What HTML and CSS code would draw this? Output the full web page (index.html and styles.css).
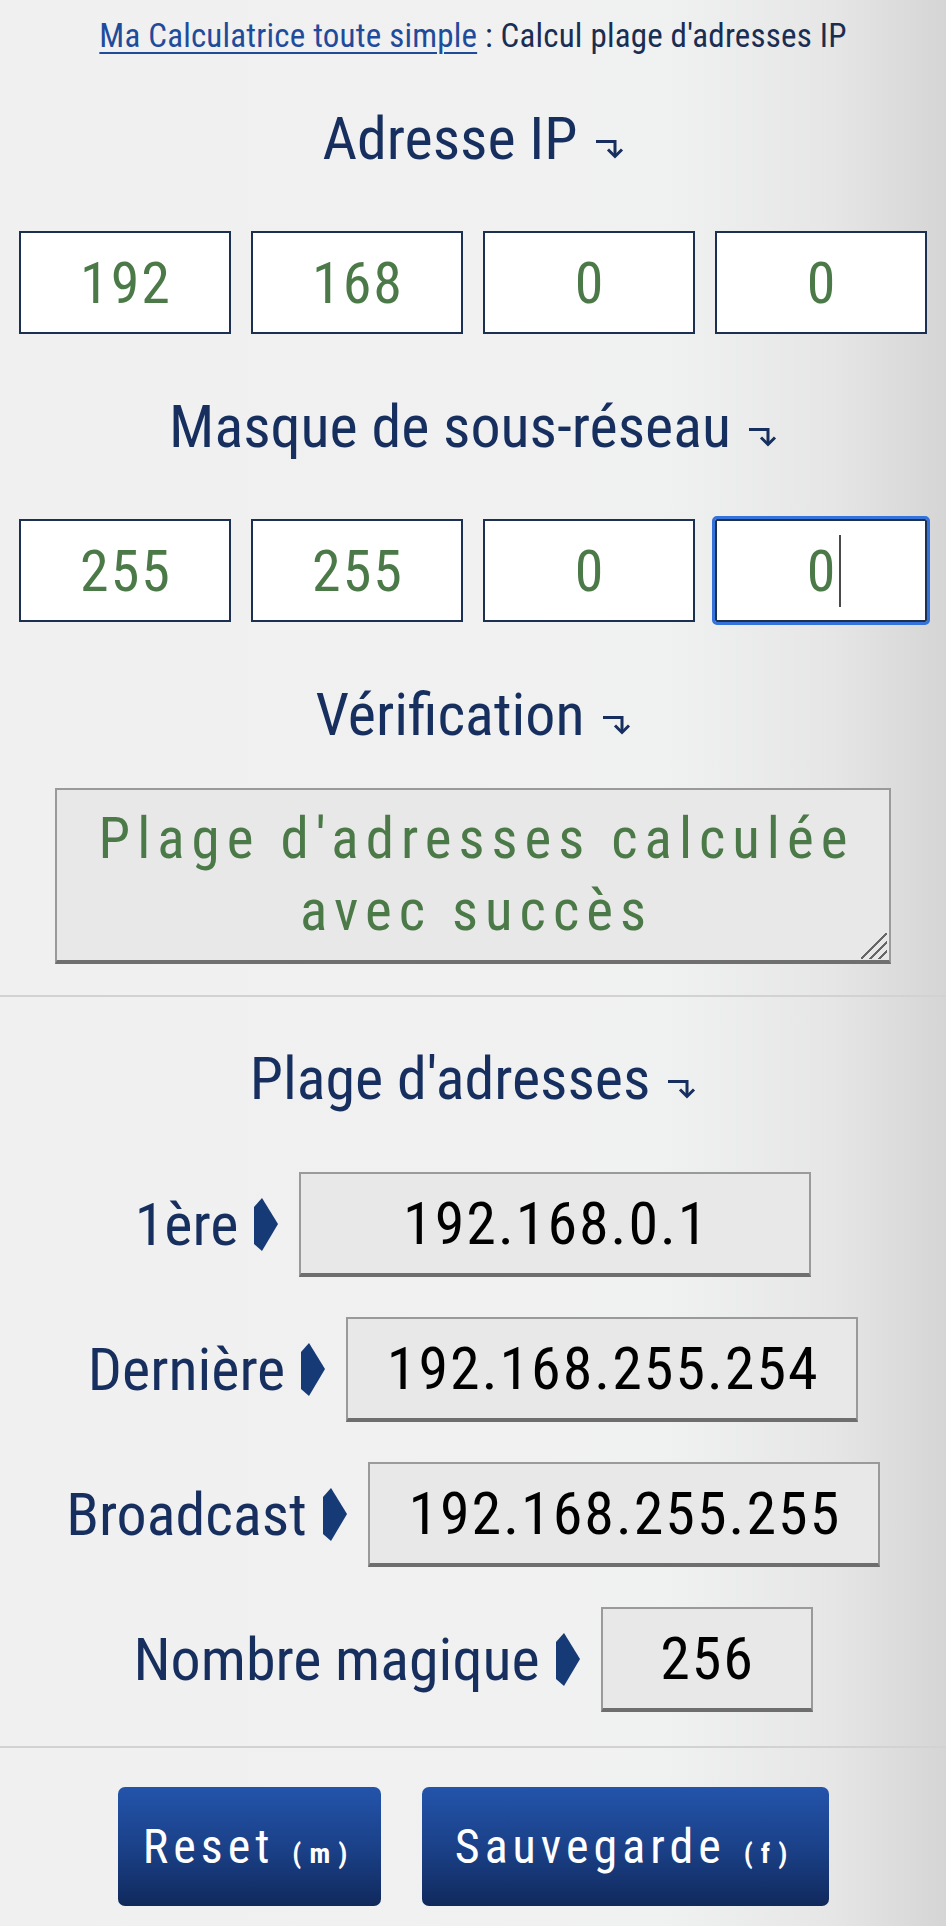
FILE: index.html
```html
<!DOCTYPE html>
<html lang="fr">
<head>
<meta charset="utf-8">
<title>Calcul plage d'adresses IP</title>
<link rel="stylesheet" href="styles.css">
</head>
<body>
<header class="crumb"><a class="crumb-link" href="#">Ma Calculatrice toute simple</a> : Calcul plage d'adresses IP</header>
<main class="page">
  <section class="block">
    <h2 class="title">Adresse IP<svg class="drop" viewBox="0 0 28 20" width="28" height="20"><path d="M0 2.5H19V17" fill="none" stroke="currentColor" stroke-width="3"/><path d="M12 10.5L19 17.5L26 10.5" fill="none" stroke="currentColor" stroke-width="3"/></svg></h2>
    <div class="octets">
      <input class="octet" type="text" value="192">
      <input class="octet" type="text" value="168">
      <input class="octet" type="text" value="0">
      <input class="octet" type="text" value="0">
    </div>
  </section>
  <section class="block">
    <h2 class="title">Masque de sous-réseau<svg class="drop" viewBox="0 0 28 20" width="28" height="20"><path d="M0 2.5H19V17" fill="none" stroke="currentColor" stroke-width="3"/><path d="M12 10.5L19 17.5L26 10.5" fill="none" stroke="currentColor" stroke-width="3"/></svg></h2>
    <div class="octets">
      <input class="octet" type="text" value="255">
      <input class="octet" type="text" value="255">
      <input class="octet" type="text" value="0">
      <div class="octet-wrap"><input class="octet octet-focus" type="text" value="0"><span class="caret"></span></div>
    </div>
  </section>
  <section class="block block-check">
    <h2 class="title title-tight">Vérification<svg class="drop" viewBox="0 0 28 20" width="28" height="20"><path d="M0 2.5H19V17" fill="none" stroke="currentColor" stroke-width="3"/><path d="M12 10.5L19 17.5L26 10.5" fill="none" stroke="currentColor" stroke-width="3"/></svg></h2>
    <div class="status-wrap">
      <textarea class="status" readonly>Plage d'adresses calculée&#10;avec succès</textarea>
      <span class="grip"></span>
    </div>
  </section>
  <hr class="rule">
  <section class="block block-range">
    <h2 class="title">Plage d'adresses<svg class="drop" viewBox="0 0 28 20" width="28" height="20"><path d="M0 2.5H19V17" fill="none" stroke="currentColor" stroke-width="3"/><path d="M12 10.5L19 17.5L26 10.5" fill="none" stroke="currentColor" stroke-width="3"/></svg></h2>
    <div class="results">
      <div class="result-row">
        <span class="result-label">1ère</span>
        <svg class="pointer" viewBox="0 0 24 53" width="24" height="53"><polygon points="0,9 8,0 24,26 8,53 0,46" fill="currentColor"/></svg>
        <div class="result-value">192.168.0.1</div>
      </div>
      <div class="result-row">
        <span class="result-label">Dernière</span>
        <svg class="pointer" viewBox="0 0 24 53" width="24" height="53"><polygon points="0,9 8,0 24,26 8,53 0,46" fill="currentColor"/></svg>
        <div class="result-value">192.168.255.254</div>
      </div>
      <div class="result-row">
        <span class="result-label">Broadcast</span>
        <svg class="pointer" viewBox="0 0 24 53" width="24" height="53"><polygon points="0,9 8,0 24,26 8,53 0,46" fill="currentColor"/></svg>
        <div class="result-value">192.168.255.255</div>
      </div>
      <div class="result-row">
        <span class="result-label">Nombre magique</span>
        <svg class="pointer" viewBox="0 0 24 53" width="24" height="53"><polygon points="0,9 8,0 24,26 8,53 0,46" fill="currentColor"/></svg>
        <div class="result-value result-small">256</div>
      </div>
    </div>
  </section>
  <hr class="rule">
  <div class="actions">
    <button class="btn btn-reset" type="button">Reset<span class="key">(m)</span></button>
    <button class="btn btn-save" type="button">Sauvegarde<span class="key">(f)</span></button>
  </div>
</main>
</body>
</html>
```

FILE: styles.css
```css
html, body {
  margin: 0;
  padding: 0;
}

body {
  min-height: 1926px;
  background: linear-gradient(to right, #f0f0f0 0%, #f0f1f1 70%, #e6e6e6 88%, #d5d5d5 100%);
  font-family: "Roboto Condensed", "DejaVu Sans Condensed", sans-serif;
  color: #162f5e;
}

.crumb {
  padding-top: 16px;
  height: 40px;
  line-height: 40px;
  text-align: center;
  font-size: 33px;
  letter-spacing: 0.2px;
  color: #1a2d52;
}

.crumb-link {
  color: #1f4b9b;
  text-decoration: underline;
  text-decoration-thickness: 2px;
  text-underline-offset: 5px;
}

.page {
  display: flex;
  flex-direction: column;
}

.block {
  display: flex;
  flex-direction: column;
}

.title {
  margin: 47px 0 56px;
  font-size: 60px;
  line-height: 72px;
  font-weight: normal;
  text-align: center;
  color: #162f5e;
}

.title-tight {
  margin-bottom: 37px;
}

.drop {
  margin-left: 18px;
  vertical-align: baseline;
  color: #162f5e;
}

.block + .block .title {
  margin-top: 57px;
}

.octets {
  display: grid;
  grid-template-columns: repeat(4, 212px);
  gap: 20px;
  justify-content: center;
}

.octet {
  box-sizing: border-box;
  width: 212px;
  height: 103px;
  margin: 0;
  padding: 0 0 0 2px;
  border: 2px solid #1c3152;
  border-radius: 0;
  background: #ffffff;
  font-family: inherit;
  font-size: 58px;
  letter-spacing: 2px;
  text-align: center;
  color: #4b7a48;
}

.octet-wrap {
  position: relative;
}

.octet-focus {
  outline: 3px solid #3572d9;
  outline-offset: 0;
  border-radius: 2px;
}

.caret {
  position: absolute;
  left: 124px;
  top: 16px;
  width: 2px;
  height: 72px;
  background: #4a4a4a;
}

.status-wrap {
  position: relative;
  width: 836px;
  margin: 0 auto;
}

.status {
  display: block;
  box-sizing: border-box;
  width: 836px;
  height: 176px;
  margin: 0;
  padding: 13px 0 0 7px;
  border: 2px solid #9a9a9a;
  border-bottom: 4px solid #6f6f6f;
  border-radius: 0;
  background: #e8e8e8;
  font-family: inherit;
  font-size: 57px;
  line-height: 72px;
  letter-spacing: 7px;
  text-align: center;
  white-space: pre;
  color: #4b7a48;
  overflow: hidden;
  resize: none;
}

.grip {
  position: absolute;
  right: 4px;
  bottom: 5px;
  width: 26px;
  height: 26px;
  background: linear-gradient(135deg,
    transparent 0 47%, #666666 47% 53%,
    transparent 53% 64%, #666666 64% 70%,
    transparent 70% 81%, #666666 81% 87%,
    transparent 87%);
}

.rule {
  margin: 31px 0 0;
  height: 2px;
  border: 0;
  background: #d2d2d2;
}

.block-range .title {
  margin-top: 46px;
  margin-bottom: 57px;
}

.results {
  display: flex;
  flex-direction: column;
  gap: 40px;
}

.result-row {
  display: flex;
  justify-content: center;
  align-items: center;
  height: 105px;
}

.result-label {
  font-size: 60px;
  line-height: 60px;
  color: #162f5e;
}

.pointer {
  margin: 0 21px 0 16px;
  color: #163a75;
  flex: none;
}

.result-value {
  box-sizing: border-box;
  width: 512px;
  height: 105px;
  padding-left: 2px;
  border: 2px solid #9a9a9a;
  border-bottom: 4px solid #6e6e6e;
  background: #e8e8e8;
  font-size: 60px;
  line-height: 99px;
  letter-spacing: 2px;
  text-align: center;
  color: #000000;
}

.result-small {
  width: 212px;
}

.block-range + .rule {
  margin-top: 34px;
}

.actions {
  display: flex;
  justify-content: center;
  gap: 41px;
  margin-top: 39px;
}

.btn {
  height: 119px;
  padding: 0;
  border: 0;
  border-radius: 7px;
  background: linear-gradient(to bottom, #2354ab 0%, #1a3f85 55%, #10295c 100%);
  font-family: inherit;
  font-size: 48px;
  letter-spacing: 5px;
  color: #ffffff;
}

.btn-reset {
  width: 263px;
}

.btn-save {
  width: 407px;
}

.key {
  margin-left: 18px;
  font-size: 28px;
  font-weight: bold;
  letter-spacing: 8px;
}
```
